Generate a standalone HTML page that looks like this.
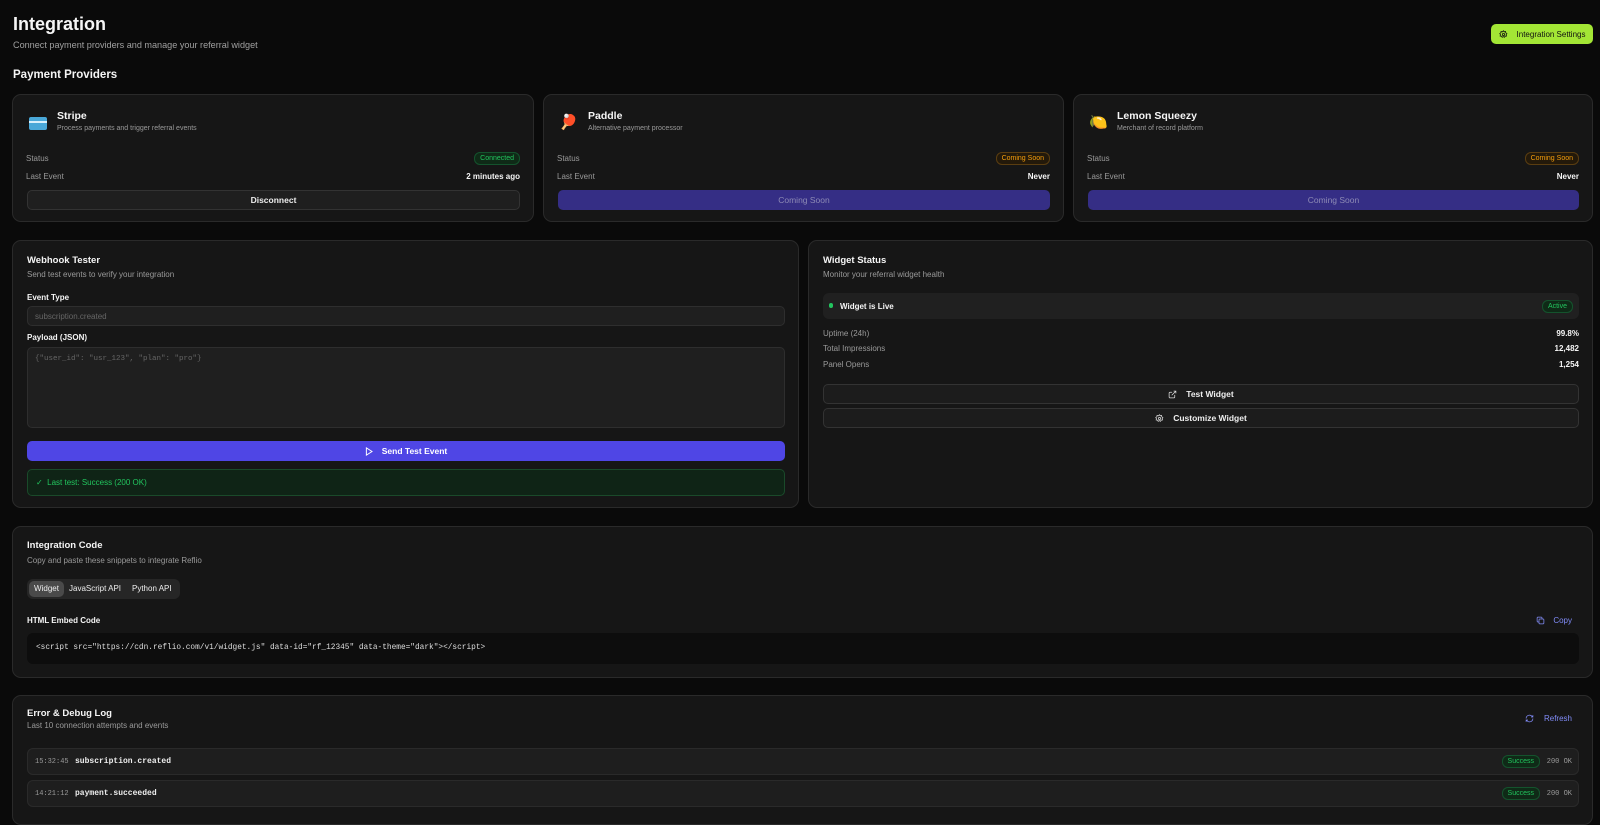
<!DOCTYPE html>
<html><head><meta charset="utf-8"><style>
*{box-sizing:border-box;margin:0;padding:0}
body{width:1600px;height:805px;overflow:hidden;background:#0a0a0a;font-family:"Liberation Sans",sans-serif;color:#e5e5e5;position:relative}
.a{position:absolute}
.card{position:absolute;background:#161616;border:1px solid #2a2a2a;border-radius:9px}
.t{font-weight:bold;color:#f5f5f5}
.m{color:#9a9a9a}
.mono{font-family:"Liberation Mono",monospace}
.btn{position:absolute;border-radius:5px;display:flex;align-items:center;justify-content:center;font-size:8.5px;font-weight:bold}
.badge{position:absolute;border-radius:6px;font-size:7px;padding:0 5px;height:13px;line-height:12px}
.row{position:absolute;left:0;right:0;font-size:8px;display:flex;justify-content:space-between}
</style></head><body>

<div class="a t" style="left:13px;top:14px;font-size:18px">Integration</div>
<div class="a m" style="left:13px;top:40px;font-size:9.1px;color:#a0a0a0">Connect payment providers and manage your referral widget</div>
<div class="btn" style="left:1491px;top:24px;width:102px;height:20px;background:#a3e635;color:#111;font-weight:normal;font-size:8px;border-radius:5px">
<svg width="9" height="9" viewBox="0 0 24 24" fill="none" stroke="#111" stroke-width="2.2" style="margin-right:9px"><circle cx="12" cy="12" r="3"/><path d="M12 2l2 3 3.5-1 .5 3.5 3 2-2 3 1 3.5-3.5.5-2 3-3-2-3 2-2-3-3.5-.5 1-3.5-2-3 3-2 .5-3.5 3.5 1z"/></svg>Integration Settings</div>

<div class="a t" style="left:13px;top:69px;font-size:11.5px">Payment Providers</div>

<div class="card" style="left:12px;top:94px;width:522px;height:128px">
 <div class="a" style="left:16px;top:22px;width:18px;height:13px;background:#4aa8d8;border-radius:2px"><div style="margin-top:4px;height:2px;background:#d9f0fb"></div></div>
 <div class="a t" style="left:44px;top:15px;font-size:10.5px">Stripe</div>
 <div class="a m" style="left:44px;top:30px;font-size:7px">Process payments and trigger referral events</div>
 <div class="row" style="top:59px;padding:0 13px"><span class="m">Status</span></div>
 <div class="badge" style="right:13px;top:57px;color:#22c55e;background:#0f2a17;border:1px solid #14532d">Connected</div>
 <div class="row" style="top:77px;padding:0 13px"><span class="m">Last Event</span><span class="t">2 minutes ago</span></div>
 <div class="btn" style="left:14px;right:13px;top:95px;height:20px;background:#1f1f1f;border:1px solid #333;color:#eee">Disconnect</div>
</div>

<div class="card" style="left:543px;top:94px;width:521px;height:128px">
 <div class="a" style="left:15px;top:18px;font-size:15px">🏓</div>
 <div class="a t" style="left:44px;top:15px;font-size:10.5px">Paddle</div>
 <div class="a m" style="left:44px;top:30px;font-size:7px">Alternative payment processor</div>
 <div class="row" style="top:59px;padding:0 13px"><span class="m">Status</span></div>
 <div class="badge" style="right:13px;top:57px;color:#f59e0b;background:#23190a;border:1px solid #5a3d10">Coming Soon</div>
 <div class="row" style="top:77px;padding:0 13px"><span class="m">Last Event</span><span class="t">Never</span></div>
 <div class="btn" style="left:14px;right:13px;top:95px;height:20px;background:#352e85;color:#8d8ab5;font-weight:normal">Coming Soon</div>
</div>

<div class="card" style="left:1073px;top:94px;width:520px;height:128px">
 <div class="a" style="left:15px;top:18px;font-size:15px">🍋</div>
 <div class="a t" style="left:43px;top:15px;font-size:10.5px">Lemon Squeezy</div>
 <div class="a m" style="left:43px;top:30px;font-size:7px">Merchant of record platform</div>
 <div class="row" style="top:59px;padding:0 13px"><span class="m">Status</span></div>
 <div class="badge" style="right:13px;top:57px;color:#f59e0b;background:#23190a;border:1px solid #5a3d10">Coming Soon</div>
 <div class="row" style="top:77px;padding:0 13px"><span class="m">Last Event</span><span class="t">Never</span></div>
 <div class="btn" style="left:14px;right:13px;top:95px;height:20px;background:#352e85;color:#8d8ab5;font-weight:normal">Coming Soon</div>
</div>

<div class="card" style="left:12px;top:240px;width:787px;height:268px">
 <div class="a t" style="left:14px;top:14px;font-size:9.5px">Webhook Tester</div>
 <div class="a m" style="left:14px;top:29px;font-size:8px">Send test events to verify your integration</div>
 <div class="a t" style="left:14px;top:52px;font-size:8px">Event Type</div>
 <div class="a" style="left:14px;top:65px;right:13px;height:20px;background:#1f1f1f;border:1px solid #2e2e2e;border-radius:5px;font-size:8px;color:#666;padding:5px 7px">subscription.created</div>
 <div class="a t" style="left:14px;top:92px;font-size:8px">Payload (JSON)</div>
 <div class="a mono" style="left:14px;top:106px;right:13px;height:81px;background:#1f1f1f;border:1px solid #2e2e2e;border-radius:5px;font-size:7.5px;color:#666;padding:7px 7px">{"user_id": "usr_123", "plan": "pro"}</div>
 <div class="btn" style="left:14px;right:13px;top:200px;height:20px;background:#4f46e5;color:#fff">
 <svg width="8" height="9" viewBox="0 0 10 12" fill="none" stroke="#fff" stroke-width="1.3" style="margin-right:9px"><path d="M1.5 1.2v9.6L9 6z"/></svg>Send Test Event</div>
 <div class="a" style="left:14px;right:13px;top:228px;height:27px;background:#0f2416;border:1px solid #1a4a2a;border-radius:5px;color:#22c55e;font-size:8px;padding:8px 8px">✓&nbsp;&nbsp;Last test: Success (200 OK)</div>
</div>

<div class="card" style="left:808px;top:240px;width:785px;height:268px">
 <div class="a t" style="left:14px;top:14px;font-size:9.5px">Widget Status</div>
 <div class="a m" style="left:14px;top:29px;font-size:8px">Monitor your referral widget health</div>
 <div class="a" style="left:14px;right:13px;top:52px;height:26px;background:#202020;border-radius:6px">
  <div class="a" style="left:6px;top:10px;width:4px;height:5px;border-radius:2px;background:#22c55e"></div>
  <div class="a t" style="left:17px;top:9px;font-size:8px">Widget is Live</div>
  <div class="badge" style="right:6px;top:7px;color:#22c55e;background:#0f2a17;border:1px solid #14532d">Active</div>
 </div>
 <div class="row" style="top:88px;padding:0 13px 0 14px"><span class="m">Uptime (24h)</span><span class="t">99.8%</span></div>
 <div class="row" style="top:103px;padding:0 13px 0 14px"><span class="m">Total Impressions</span><span class="t">12,482</span></div>
 <div class="row" style="top:119px;padding:0 13px 0 14px"><span class="m">Panel Opens</span><span class="t">1,254</span></div>
 <div class="btn" style="left:14px;right:13px;top:143px;height:20px;background:#1c1c1c;border:1px solid #333;color:#eee">
 <svg width="9" height="9" viewBox="0 0 24 24" fill="none" stroke="#ddd" stroke-width="2" style="margin-right:9px"><path d="M18 13v6a2 2 0 0 1-2 2H5a2 2 0 0 1-2-2V8a2 2 0 0 1 2-2h6M15 3h6v6M10 14L21 3"/></svg>Test Widget</div>
 <div class="btn" style="left:14px;right:13px;top:167px;height:20px;background:#1c1c1c;border:1px solid #333;color:#eee">
 <svg width="9" height="9" viewBox="0 0 24 24" fill="none" stroke="#ddd" stroke-width="2" style="margin-right:9px"><circle cx="12" cy="12" r="3"/><path d="M12 2l2 3 3.5-1 .5 3.5 3 2-2 3 1 3.5-3.5.5-2 3-3-2-3 2-2-3-3.5-.5 1-3.5-2-3 3-2 .5-3.5 3.5 1z"/></svg>Customize Widget</div>
</div>

<div class="card" style="left:12px;top:526px;width:1581px;height:152px">
 <div class="a t" style="left:14px;top:13px;font-size:9.5px">Integration Code</div>
 <div class="a m" style="left:14px;top:29px;font-size:8px">Copy and paste these snippets to integrate Reflio</div>
 <div class="a" style="left:14px;top:52px;width:153px;height:20px;background:#262626;border-radius:6px;font-size:8px;color:#eee">
  <div class="a" style="left:2px;top:2px;width:35px;height:16px;background:#4a4a4a;border-radius:5px;text-align:center;line-height:16px">Widget</div>
  <div class="a" style="left:42px;top:5px">JavaScript API</div>
  <div class="a" style="left:105px;top:5px">Python API</div>
 </div>
 <div class="a t" style="left:14px;top:89px;font-size:8px">HTML Embed Code</div>
 <div class="a" style="right:20px;top:89px;font-size:8px;color:#818cf8;display:flex;align-items:center">
 <svg width="9" height="9" viewBox="0 0 24 24" fill="none" stroke="#818cf8" stroke-width="2" style="margin-right:8px"><rect x="8" y="8" width="13" height="13" rx="2"/><path d="M16 8V5a2 2 0 0 0-2-2H5a2 2 0 0 0-2 2v9a2 2 0 0 0 2 2h3"/></svg>Copy</div>
 <div class="a mono" style="left:14px;right:13px;top:106px;height:31px;background:#0d0d0d;border-radius:6px;font-size:7.8px;color:#ddd;padding:11px 9px">&lt;script src="https://cdn.reflio.com/v1/widget.js" data-id="rf_12345" data-theme="dark"&gt;&lt;/script&gt;</div>
</div>

<div class="card" style="left:12px;top:695px;width:1581px;height:130px">
 <div class="a t" style="left:14px;top:12px;font-size:9.5px">Error &amp; Debug Log</div>
 <div class="a m" style="left:14px;top:25px;font-size:8px">Last 10 connection attempts and events</div>
 <div class="a" style="right:20px;top:18px;font-size:8px;color:#818cf8;display:flex;align-items:center">
 <svg width="9" height="9" viewBox="0 0 24 24" fill="none" stroke="#818cf8" stroke-width="2" style="margin-right:10px"><path d="M21 12a9 9 0 0 1-15 6.7L3 16M3 12a9 9 0 0 1 15-6.7L21 8M21 3v5h-5M3 21v-5h5"/></svg>Refresh</div>
 <div class="a" style="left:14px;right:13px;top:52px;height:27px;background:#1e1e1e;border:1px solid #2a2a2a;border-radius:6px">
  <span class="a mono m" style="left:7px;top:9px;font-size:7px">15:32:45</span>
  <span class="a mono" style="left:47px;top:8px;font-size:8px;color:#eee;font-weight:bold">subscription.created</span>
  <div class="badge" style="right:38px;top:6px;color:#22c55e;background:#0f2a17;border:1px solid #14532d">Success</div>
  <span class="a mono m" style="right:6px;top:9px;font-size:7px">200 OK</span>
 </div>
 <div class="a" style="left:14px;right:13px;top:84px;height:27px;background:#1e1e1e;border:1px solid #2a2a2a;border-radius:6px">
  <span class="a mono m" style="left:7px;top:9px;font-size:7px">14:21:12</span>
  <span class="a mono" style="left:47px;top:8px;font-size:8px;color:#eee;font-weight:bold">payment.succeeded</span>
  <div class="badge" style="right:38px;top:6px;color:#22c55e;background:#0f2a17;border:1px solid #14532d">Success</div>
  <span class="a mono m" style="right:6px;top:9px;font-size:7px">200 OK</span>
 </div>
</div>
</body></html>
